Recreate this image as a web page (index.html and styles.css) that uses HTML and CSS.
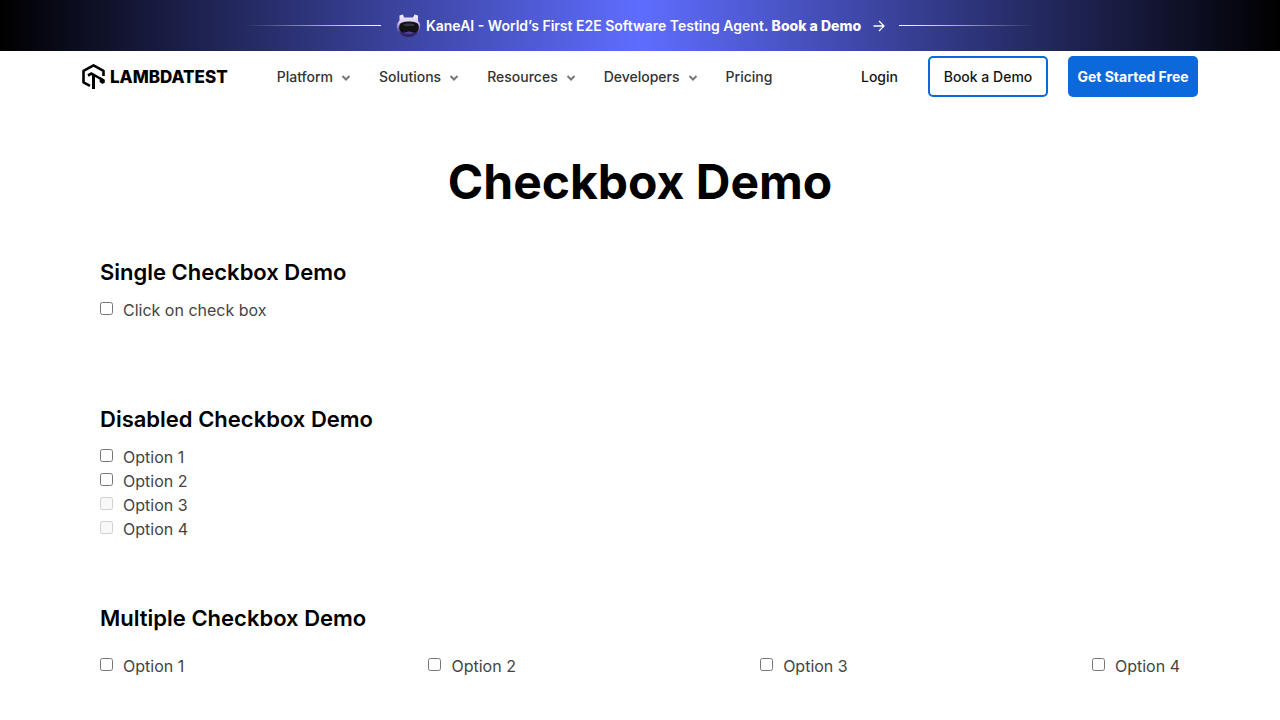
FILE: index.html
```html
<!DOCTYPE html>
<html lang="en">
<head>
<meta charset="utf-8">
<meta name="viewport" content="width=device-width, initial-scale=1">
<title>Checkbox Demo | LambdaTest</title>
<link rel="stylesheet" href="styles.css">
</head>
<body>
<a class="banner" href="#kane">
  <span class="rule rule-left"></span>
  <svg class="robot" width="26" height="26" viewBox="0 0 26 26" aria-hidden="true">
    <defs>
      <linearGradient id="shell" x1="0" y1="0" x2="0" y2="1">
        <stop offset="0" stop-color="#f6efff"/><stop offset=".35" stop-color="#d8caf2"/><stop offset=".6" stop-color="#7a66bd"/><stop offset="1" stop-color="#2c2a80"/>
      </linearGradient>
    </defs>
    <path d="M4.500 2.500 8 1.500 9 4.500h9l1.500-3 3.500 1v5.500c3 3 3 8 .5 11.500-2.500 3.500-6.500 4.500-10 4.500s-7-1-10-4.500C1 16.500 1 11 4.500 7.500z" fill="url(#shell)"/>
    <path d="M4 18c4 4 15 4 19 0-2 4-6 6-9.500 6S6 22 4 18z" fill="#342367"/>
    <path d="M5 11c2-3.500 16-3.500 18 0 1.500 3 .8 7-2 8.500-2.500 1-4.500-1-7-1s-4.500 2-7 1C4 18 3.500 14 5 11z" fill="#111116"/>
    <path d="M8 11.500c3-1.500 9-1.500 12 0-1 1.500-2 1.500-6 1.500S8.500 13 8 11.500z" fill="#38373d"/>
  </svg>
  <span class="banner-text">KaneAI - World’s First E2E Software Testing Agent. <b>Book a Demo</b></span>
  <svg class="arrow" width="12" height="12" viewBox="0 0 12 12" fill="none" stroke="#fff" stroke-width="1.300" aria-hidden="true"><path d="M.5 6h10.500M6 1l5 5-5 5"/></svg>
  <span class="rule rule-right"></span>
</a>
<header class="header">
  <a class="logo" href="#home">
    <svg width="24" height="27" viewBox="0 0 24 27" fill="none" stroke="#000" stroke-width="2.600" stroke-linejoin="round" aria-hidden="true">
      <path d="M8 22.800 1.500 19.300V7.800L11.500 2.300 21.500 7.800V13"/>
      <path d="M6 12.500 9.500 10.500 21.500 17.500"/>
      <path d="M18 14 22.800 16.800V19.500L20.500 21 17.500 19" fill="#000" stroke="none"/>
      <path d="M11.500 26V11.500" stroke-width="3"/>
    </svg>
    <span>LAMBDATEST</span>
  </a>
  <nav class="nav">
    <button type="button">Platform <svg class="chevron" viewBox="0 0 10 6"><path d="M1.500 1l3.500 3.500L8.500 1"/></svg></button>
    <button type="button">Solutions <svg class="chevron" viewBox="0 0 10 6"><path d="M1.500 1l3.500 3.500L8.500 1"/></svg></button>
    <button type="button">Resources <svg class="chevron" viewBox="0 0 10 6"><path d="M1.500 1l3.500 3.500L8.500 1"/></svg></button>
    <button type="button">Developers <svg class="chevron" viewBox="0 0 10 6"><path d="M1.500 1l3.500 3.500L8.500 1"/></svg></button>
    <a href="#pricing">Pricing</a>
  </nav>
  <div class="actions">
    <a class="login" href="#login">Login</a>
    <button type="button" class="btn btn-outline">Book a Demo</button>
    <button type="button" class="btn btn-primary">Get Started Free</button>
  </div>
</header>
<main>
  <h1>Checkbox Demo</h1>
  <div class="content">
    <section class="single">
      <h2>Single Checkbox Demo</h2>
      <label><input type="checkbox">Click on check box</label>
    </section>
    <section class="disabled">
      <h2>Disabled Checkbox Demo</h2>
      <label><input type="checkbox">Option 1</label>
      <label><input type="checkbox">Option 2</label>
      <label><input type="checkbox" disabled>Option 3</label>
      <label><input type="checkbox" disabled>Option 4</label>
    </section>
    <section class="multiple">
      <h2>Multiple Checkbox Demo</h2>
      <div class="options">
        <label><input type="checkbox">Option 1</label>
        <label><input type="checkbox">Option 2</label>
        <label><input type="checkbox">Option 3</label>
        <label><input type="checkbox">Option 4</label>
      </div>
    </section>
  </div>
</main>
</body>
</html>
```
FILE: styles.css
```css
* { box-sizing: border-box; }
body { margin: 0; font-family: Inter, "Liberation Sans", sans-serif; color: #000; background: #fff; }
a { color: inherit; text-decoration: none; }
button { font: inherit; color: inherit; background: none; border: 0; padding: 0; cursor: pointer; }

.banner {
  display: flex; align-items: center; justify-content: center;
  height: 51px; color: #fff;
  background: linear-gradient(90deg, #000 0%, #5f6dff 50%, #000 100%);
}
.banner-text { font-size: 14px; font-weight: 600; line-height: 20px; margin: 0 12px 0 5px; white-space: nowrap; }
.banner-text b { font-weight: 800; }
.rule { width: 136px; height: 1px; }
.rule-left { background: linear-gradient(90deg, transparent, #fff); margin-right: 14px; }
.rule-right { background: linear-gradient(270deg, transparent, #fff); margin-left: 14px; }

.header { display: flex; align-items: center; max-width: 1116px; height: 51px; margin: 0 auto; font-size: 14px; font-weight: 500; }
.logo { display: flex; align-items: center; gap: 4px; font-size: 17px; font-weight: 800; line-height: 24px; }
.nav { display: flex; gap: 28px; margin-left: 49px; color: #333; white-space: nowrap; }
.nav button { display: flex; align-items: center; gap: 8px; }
.chevron { width: 10px; height: 6px; margin-top: 2px; fill: none; stroke: #777; stroke-width: 2; }
.actions { display: flex; align-items: center; margin-left: auto; color: #151515; white-space: nowrap; }
.login { margin-right: 30px; }
.btn { height: 41px; border-radius: 5px; }
.btn-outline { width: 120px; border: 2px solid #0b69dc; margin-right: 20px; }
.btn-primary { width: 130px; color: #fff; background: #0b69dc; font-weight: 700; }

h1 { margin: 48px 0 0; font-size: 48px; font-weight: 700; line-height: 64px; text-align: center; }
.content { max-width: 1080px; margin: 42px auto 0; }
h2 { margin: 0 0 9px; font-size: 22px; font-weight: 600; line-height: 33px; }
label { display: flex; align-items: flex-start; gap: 10px; font-size: 16px; line-height: 24px; color: #444; }
input { width: 13px; height: 13px; margin: 4px 0 0; }
.single { margin-bottom: 81px; }
.disabled { margin-bottom: 61px; }
.multiple h2 { margin-bottom: 19px; }
.options { display: flex; justify-content: space-between; }
```
